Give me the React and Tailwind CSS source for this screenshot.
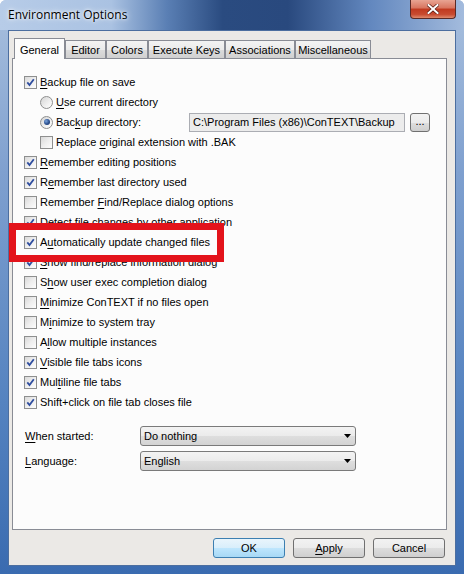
import React from "react";

const FONT = "font-[family-name:Liberation_Sans,Arial,sans-serif]";

function Check({ on }) {
  return (
    <span className="w-[13px] h-[13px] shrink-0 border border-[#8e8f8f] bg-[linear-gradient(135deg,#d9d9d9_0%,#eeeeee_50%,#fdfdfd_100%)] flex items-center justify-center">
      {on && (
        <svg width="9" height="9" viewBox="0 0 9 9">
          <path d="M1.3 4.4 L3.5 7 L7.8 1.2" fill="none" stroke="#2f4e9f" strokeWidth="1.8" />
        </svg>
      )}
    </span>
  );
}

function Radio({ on }) {
  return (
    <span className="w-[13px] h-[13px] shrink-0 rounded-full border border-[#8e8f8f] bg-[linear-gradient(135deg,#d5d5d5_0%,#f0f0f0_60%,#ffffff_100%)] flex items-center justify-center">
      {on && <span className="w-[6px] h-[6px] rounded-full bg-[radial-gradient(circle_at_35%_35%,#7aa3dc_0%,#2a4f8e_55%,#183466_100%)]" />}
    </span>
  );
}

// label: [before, underlined char, after]
function Label({ parts }) {
  const [a, u, b] = parts;
  return (
    <span className="whitespace-nowrap">
      {a}
      {u && <u className="underline-offset-[2px]">{u}</u>}
      {b}
    </span>
  );
}

const rows = [
  { type: "check", on: true, parts: ["", "B", "ackup file on save"] },
  { type: "radio", on: false, indent: true, parts: ["", "U", "se current directory"] },
  { type: "path" },
  { type: "check", on: false, indent: true, parts: ["Replace ", "o", "riginal extension with .BAK"] },
  { type: "check", on: true, parts: ["", "R", "emember editing positions"] },
  { type: "check", on: true, parts: ["R", "e", "member last directory used"] },
  { type: "check", on: false, parts: ["Remember ", "F", "ind/Replace dialog options"] },
  { type: "check", on: true, parts: ["Detect file changes by other application"] },
  { type: "check", on: true, parts: ["A", "u", "tomatically update changed files"] },
  { type: "check", on: true, parts: ["", "S", "how find/replace information dialog"] },
  { type: "check", on: false, parts: ["S", "h", "ow user exec completion dialog"] },
  { type: "check", on: false, parts: ["", "M", "inimize ConTEXT if no files open"] },
  { type: "check", on: false, parts: ["M", "i", "nimize to system tray"] },
  { type: "check", on: false, parts: ["A", "l", "low multiple instances"] },
  { type: "check", on: true, parts: ["", "V", "isible file tabs icons"] },
  { type: "check", on: true, parts: ["Mul", "t", "iline file tabs"] },
  { type: "check", on: true, parts: ["Shift+click on file tab closes file"] },
];

const tabs = [
  { label: "General", w: "w-[51px]", active: true },
  { label: "Editor", w: "w-[41px]" },
  { label: "Colors", w: "w-[42px]" },
  { label: "Execute Keys", w: "w-[77px]" },
  { label: "Associations", w: "w-[70px]" },
  { label: "Miscellaneous", w: "w-[76px]" },
];

function Combo({ value }) {
  return (
    <div className="w-[216px] h-[20px] rounded-[3px] border border-[#7a7a7a] bg-[linear-gradient(180deg,#f3f3f3_0%,#ebebeb_50%,#dedede_51%,#d3d3d3_100%)] flex items-center pl-[3px] pr-[4px]">
      <span className="flex-1">{value}</span>
      <svg width="7" height="4" viewBox="0 0 7 4">
        <path d="M0 0 H7 L3.5 4 Z" fill="#000" />
      </svg>
    </div>
  );
}

function Btn({ children, primary }) {
  return (
    <div
      className={
        "w-[72px] h-[20px] rounded-[3px] border flex items-center justify-center " +
        (primary
          ? "border-[#3c7fb1] bg-[linear-gradient(180deg,#e9f5fc_0%,#d8eefb_50%,#bee6fd_51%,#a7d9f5_100%)]"
          : "border-[#707070] bg-[linear-gradient(180deg,#f2f2f2_0%,#ebebeb_50%,#dddddd_51%,#cfcfcf_100%)]")
      }
    >
      {children}
    </div>
  );
}

export default function App() {
  return (
    <div className={"relative w-[464px] h-[574px] overflow-hidden rounded-t-[6px] bg-[linear-gradient(180deg,#a9c0de_0%,#7fa0cf_30%,#5583c0_70%,#3a6bb0_100%)] text-[11px] leading-none text-black " + FONT}>
      {/* title bar */}
      <div className="h-[30px] flex items-center pl-[8px] bg-[linear-gradient(90deg,#b7cce8_0%,#aac2e2_24%,#5a7fb4_36%,#2a4b80_48%,#29497e_62%,#6388bf_80%,#a3bbdd_100%)]">
        <span className="text-[12px] font-[family-name:Open_Sans,sans-serif] text-black [text-shadow:0_0_6px_#ffffff,0_0_3px_#ffffff]">
          Environment Options
        </span>
      </div>
      <div className="absolute left-[410px] top-0 w-[46px] h-[19px] rounded-b-[4px] border border-t-0 border-[#5a2a26] bg-[linear-gradient(180deg,#e8a493_0%,#d8745e_45%,#c0391f_50%,#c84b30_80%,#df8a6d_100%)] flex items-center justify-center">
        <svg width="12" height="10" viewBox="0 0 12 10">
          <path d="M1.5 1 L10.5 9 M10.5 1 L1.5 9" stroke="#5b1c14" strokeWidth="3.4" strokeLinecap="square" />
          <path d="M1.5 1 L10.5 9 M10.5 1 L1.5 9" stroke="#ffffff" strokeWidth="2" strokeLinecap="square" />
        </svg>
      </div>

      {/* client area */}
      <div className="mx-[8px] h-[536px] bg-[#ebe9e6] border border-[#4c6e9f] flex flex-col">
        <div className="h-[27px] pl-[5px] flex items-end">
          {tabs.map((t) =>
            t.active ? (
              <div
                key={t.label}
                className={t.w + " h-[21px] relative z-10 -mb-px border border-b-0 border-[#898c95] bg-[#fcfcfc] flex items-start justify-center pt-[6px]"}
              >
                {t.label}
              </div>
            ) : (
              <div
                key={t.label}
                className={t.w + " h-[18px] border border-b-0 border-[#898c95] bg-[linear-gradient(180deg,#f3f3f3_0%,#ebebeb_50%,#dcdcdc_51%,#d0d0d0_100%)] flex items-center justify-center pt-[1px]"}
              >
                {t.label}
              </div>
            )
          )}
        </div>

        <div className="ml-[3px] w-[435px] h-[472px] border border-[#898c95] bg-[#fcfcfc] pt-[13px] pl-[11px] flex flex-col">
          {rows.map((r, i) => {
            if (r.type === "path") {
              return (
                <div key={i} className="h-[20px] flex items-center pl-[16px]">
                  <Radio on />
                  <span className="w-[136px] pl-[3px]">
                    <Label parts={["Bac", "k", "up directory:"]} />
                  </span>
                  <div className="w-[216px] h-[19px] border border-[#abadb3] bg-[#ececec] flex items-center pl-[3px]">
                    {"C:\\Program Files (x86)\\ConTEXT\\Backup"}
                  </div>
                  <div className="ml-[5px] w-[20px] h-[19px] rounded-[3px] border border-[#707070] bg-[linear-gradient(180deg,#f2f2f2_0%,#ebebeb_50%,#dddddd_51%,#cfcfcf_100%)] flex items-end justify-center pb-[4px]">
                    ...
                  </div>
                </div>
              );
            }
            return (
              <div key={i} className={"h-[20px] flex items-center gap-[3px] " + (r.indent ? "pl-[16px]" : "")}>
                {r.type === "radio" ? <Radio on={r.on} /> : <Check on={r.on} />}
                <Label parts={r.parts} />
              </div>
            );
          })}

          <div className="mt-[14px] flex flex-col gap-[5px]">
            <div className="flex items-center">
              <span className="w-[116px] pl-[1px]">
                <Label parts={["", "W", "hen started:"]} />
              </span>
              <Combo value="Do nothing" />
            </div>
            <div className="flex items-center">
              <span className="w-[116px] pl-[1px]">
                <Label parts={["", "L", "anguage:"]} />
              </span>
              <Combo value="English" />
            </div>
          </div>
        </div>

        <div className="mt-[8px] pr-[10px] flex justify-end gap-[8px]">
          <Btn primary>OK</Btn>
          <Btn>
            <Label parts={["", "A", "pply"]} />
          </Btn>
          <Btn>Cancel</Btn>
        </div>
      </div>

      {/* red highlight drawn over the list */}
      <div className="absolute left-[9px] top-[223px] w-[215px] h-[39px] border-[7px] border-[#e3131b]" />
    </div>
  );
}
